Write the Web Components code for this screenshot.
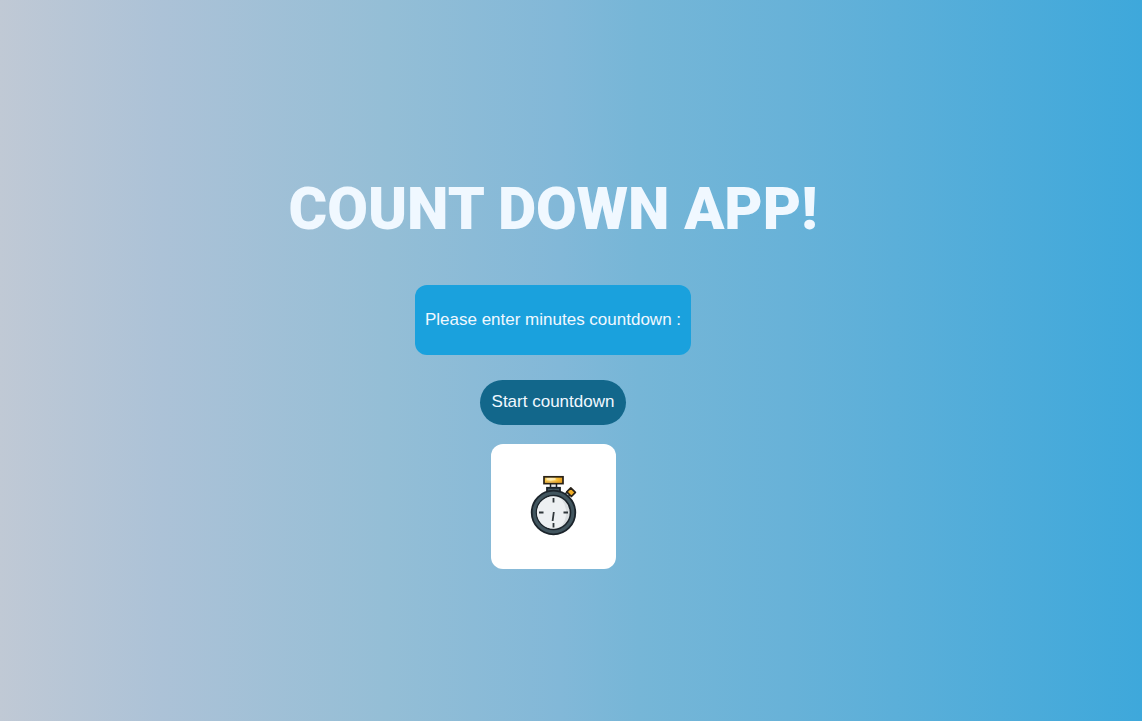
<!DOCTYPE html>
<html lang="en">
<head>
<meta charset="utf-8">
<meta name="viewport" content="width=device-width, initial-scale=1">
<title>Count Down App</title>
<style>
  body { margin: 0; font-family: "Liberation Sans", Arial, sans-serif; font-size: 17px; }
</style>
</head>
<body>
<countdown-app>
  <app-title slot="title">COUNT DOWN APP!</app-title>
  <prompt-box>Please enter minutes countdown :</prompt-box>
  <start-button>Start countdown</start-button>
  <stopwatch-card></stopwatch-card>
</countdown-app>
<script>
function define(name, markup) {
  const template = document.createElement("template");
  template.innerHTML = markup;
  customElements.define(name, class extends HTMLElement {
    constructor() {
      super();
      this.attachShadow({ mode: "open" }).append(template.content.cloneNode(true));
    }
  });
}

define("countdown-app", `
  <style>
    :host { display: block; min-height: 100vh; box-sizing: border-box; padding: 173px 36px 24px 0;
      background: linear-gradient(to right, #c0c9d5, #acc2d7 14%, #94bed6 34%, #82b8d8 49%, #76b6d7 56%, #68b2d8 69%, #3ea8db); }
    main { display: flex; flex-direction: column; align-items: center; }
    slot[name="title"] { display: block; margin-bottom: 40px; }
    ::slotted(start-button) { margin: 25px 0 19px; }
  </style>
  <main><slot name="title"></slot><slot></slot></main>
`);

define("app-title", `
  <style>
    :host { display: block; }
    h1 { margin: 0; font: 900 59px/72px Roboto, sans-serif; color: aliceblue; text-align: center; }
  </style>
  <h1><slot></slot></h1>
`);

define("prompt-box", `
  <style>
    :host { display: block; padding: 25px 10px; border-radius: 12px; background: #1aa1dd; color: aliceblue; line-height: 20px; }
    p { margin: 0; }
  </style>
  <p><slot></slot></p>
`);

define("start-button", `
  <style>
    :host { display: block; }
    button { display: block; margin: 0; border: 0; padding: 12px 12px 13px; border-radius: 24px;
      background: #12678b; color: aliceblue; font: inherit; line-height: 20px; cursor: pointer; }
  </style>
  <button type="button"><slot></slot></button>
`);

define("stopwatch-card", `
  <style>
    :host { display: grid; place-items: center; box-sizing: border-box; width: 125px; height: 125px;
      border-radius: 12px; background: #fff; }
    svg { display: block; }
  </style>
  <svg width="49" height="63" viewBox="-1 0 49 63" role="img" aria-label="Stopwatch">
    <defs>
      <linearGradient id="gold" x1="0" x2="1"><stop offset="0" stop-color="#f5bd35"/><stop offset=".35" stop-color="#ffe595"/><stop offset=".7" stop-color="#f8bd32"/><stop offset="1" stop-color="#e59b1f"/></linearGradient>
    </defs>
    <rect x="20.5" y="8" width="6" height="6" fill="#e5e8ea" stroke="#1b242b" stroke-width="1.5"/>
    <rect x="14" y="1.8" width="19" height="6.8" fill="url(#gold)" stroke="#292218" stroke-width="1.7"/>
    <path d="M15.5 7h16" stroke="#dc9d2b" stroke-width="1"/>
    <path d="M16.5 4h9" stroke="#fff3cb" stroke-width="1.4"/>
    <path d="M36 21l4-4" stroke="#1b242b" stroke-width="5.5"/>
    <path d="M36 21l4-4" stroke="#bcc5c9" stroke-width="2.5"/>
    <path d="M36.8 16.8l4-4 4.6 4.5-4 4.2z" fill="#f0ad25" stroke="#292218" stroke-width="1.7" stroke-linejoin="round"/>
    <rect x="17" y="12.8" width="13" height="6" fill="#42565f" stroke="#1b242b" stroke-width="1.8"/>
    <circle cx="23.5" cy="37.5" r="21.8" fill="#42565f" stroke="#1b242b" stroke-width="1.8"/>
    <circle cx="23.5" cy="37.5" r="17" fill="#d9dddf" stroke="#1b242b" stroke-width="1.6"/>
    <path d="M23.5 21.5a16 16 0 1 0 8 29.5a22 22 0 0 0 0-27a16 16 0 0 0-8-2.5z" fill="#edf0f2"/>
    <path d="M23.5 23v4.5M23.5 48v4.5M9 37.5h4.5M33.5 37.5H38M23.8 37l-1.2 9" fill="none" stroke="#30373b" stroke-width="1.8"/>
  </svg>
`);
</script>
</body>
</html>
